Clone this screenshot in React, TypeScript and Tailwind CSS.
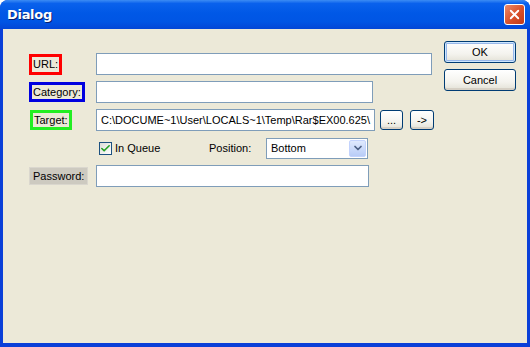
import { Check, X, ChevronDown } from 'lucide-react'

const font = "font-['Liberation_Sans',Arial,sans-serif]"

function TextBox({ width, value }: { width: string; value?: string }) {
  return (
    <div className={`${width} h-[22px] border border-[#7F9DB9] bg-white flex items-center px-[4px] text-[11px] text-black whitespace-nowrap overflow-hidden`}>
      {value}
    </div>
  )
}

function XpButton({ label, width, height, primary }: { label: string; width: string; height: string; primary?: boolean }) {
  return (
    <button
      className={`${width} ${height} rounded-[3px] border border-[#003C74] bg-[linear-gradient(#FFFFFF,#F4F3EE_60%,#E3E1D6)] text-[11px] text-black flex items-center justify-center ${
        primary ? 'shadow-[inset_0_0_0_1px_#CEE7FF,inset_0_0_0_2px_#98B8EA]' : 'shadow-[inset_0_-2px_0_#D6D0C5]'
      }`}
    >
      {label}
    </button>
  )
}

export default function App() {
  return (
    <div className={`w-[530px] h-[347px] flex flex-col rounded-t-[8px] overflow-hidden bg-[#0A3FD8] ${font}`}>
      <div className="h-[29px] shrink-0 flex items-center justify-between pl-[7px] pr-[5px] bg-[linear-gradient(#3C8CF4,#0A61EC_12%,#0058E6_45%,#0055E4_75%,#0346D6)]">
        <span className="text-white font-bold text-[13px] font-['DejaVu_Sans',sans-serif] tracking-[-0.3px] [text-shadow:1px_1px_#0A1E6A]">Dialog</span>
        <div className="w-[21px] h-[21px] rounded-[3px] border border-white bg-[linear-gradient(135deg,#E98A6A,#D8502A_55%,#C03A18)] flex items-center justify-center">
          <X size={15} strokeWidth={3} className="text-white" />
        </div>
      </div>
      <div className="flex-1 mx-[3px] mb-[4px] bg-[#ECE9D8] flex">
        <div className="flex-1 flex flex-col pl-[26px] pt-[24px] gap-[6px] text-[11px] text-black">
          <div className="h-[22px] flex items-center">
            <div className="w-[67px] flex">
              <span className="h-[21px] px-[1px] border-[3px] border-[#FF0000] flex items-center">URL:</span>
            </div>
            <TextBox width="w-[336px]" />
          </div>
          <div className="h-[22px] flex items-center">
            <div className="w-[67px] flex">
              <span className="h-[20px] px-[1px] border-[3px] border-[#0000E0] flex items-center">Category:</span>
            </div>
            <TextBox width="w-[277px]" />
          </div>
          <div className="h-[22px] flex items-center">
            <div className="w-[67px] flex pl-[1px]">
              <span className="h-[20px] px-[1px] border-[3px] border-[#22EE22] flex items-center">Target:</span>
            </div>
            <TextBox width="w-[279px]" value="C:\DOCUME~1\User\LOCALS~1\Temp\Rar$EX00.625\" />
            <div className="ml-[5px]">
              <XpButton label="..." width="w-[23px]" height="h-[20px]" />
            </div>
            <div className="ml-[7px]">
              <XpButton label="->" width="w-[24px]" height="h-[20px]" />
            </div>
          </div>
          <div className="h-[22px] flex items-center">
            <div className="w-[70px]" />
            <div className="w-[110px] flex items-center gap-[3px]">
              <div className="w-[13px] h-[13px] border border-[#1C5180] bg-[linear-gradient(135deg,#DCDCD7,#FFFFFF)] flex items-center justify-center">
                <Check size={11} strokeWidth={3.5} className="text-[#21A121]" />
              </div>
              <span>In Queue</span>
            </div>
            <span className="w-[57px]">Position:</span>
            <div className="w-[102px] h-[21px] border border-[#7F9DB9] bg-white flex items-center justify-between pl-[4px] pr-[1px]">
              <span>Bottom</span>
              <div className="w-[17px] h-[17px] rounded-[2px] bg-[linear-gradient(#E0EAFE,#B8CCF7)] border border-[#C3D3FD] flex items-center justify-center">
                <ChevronDown size={12} strokeWidth={3.5} className="text-[#4D6185]" />
              </div>
            </div>
          </div>
          <div className="h-[22px] flex items-center">
            <div className="w-[67px] flex">
              <span className="h-[18px] px-[3px] bg-[#CDCAC0] border border-[#DAD7CE] flex items-center">Password:</span>
            </div>
            <TextBox width="w-[273px]" />
          </div>
        </div>
        <div className="w-[83px] flex flex-col pt-[12px] gap-[6px]">
          <XpButton label="OK" width="w-[72px]" height="h-[22px]" primary />
          <XpButton label="Cancel" width="w-[72px]" height="h-[22px]" />
        </div>
      </div>
    </div>
  )
}
